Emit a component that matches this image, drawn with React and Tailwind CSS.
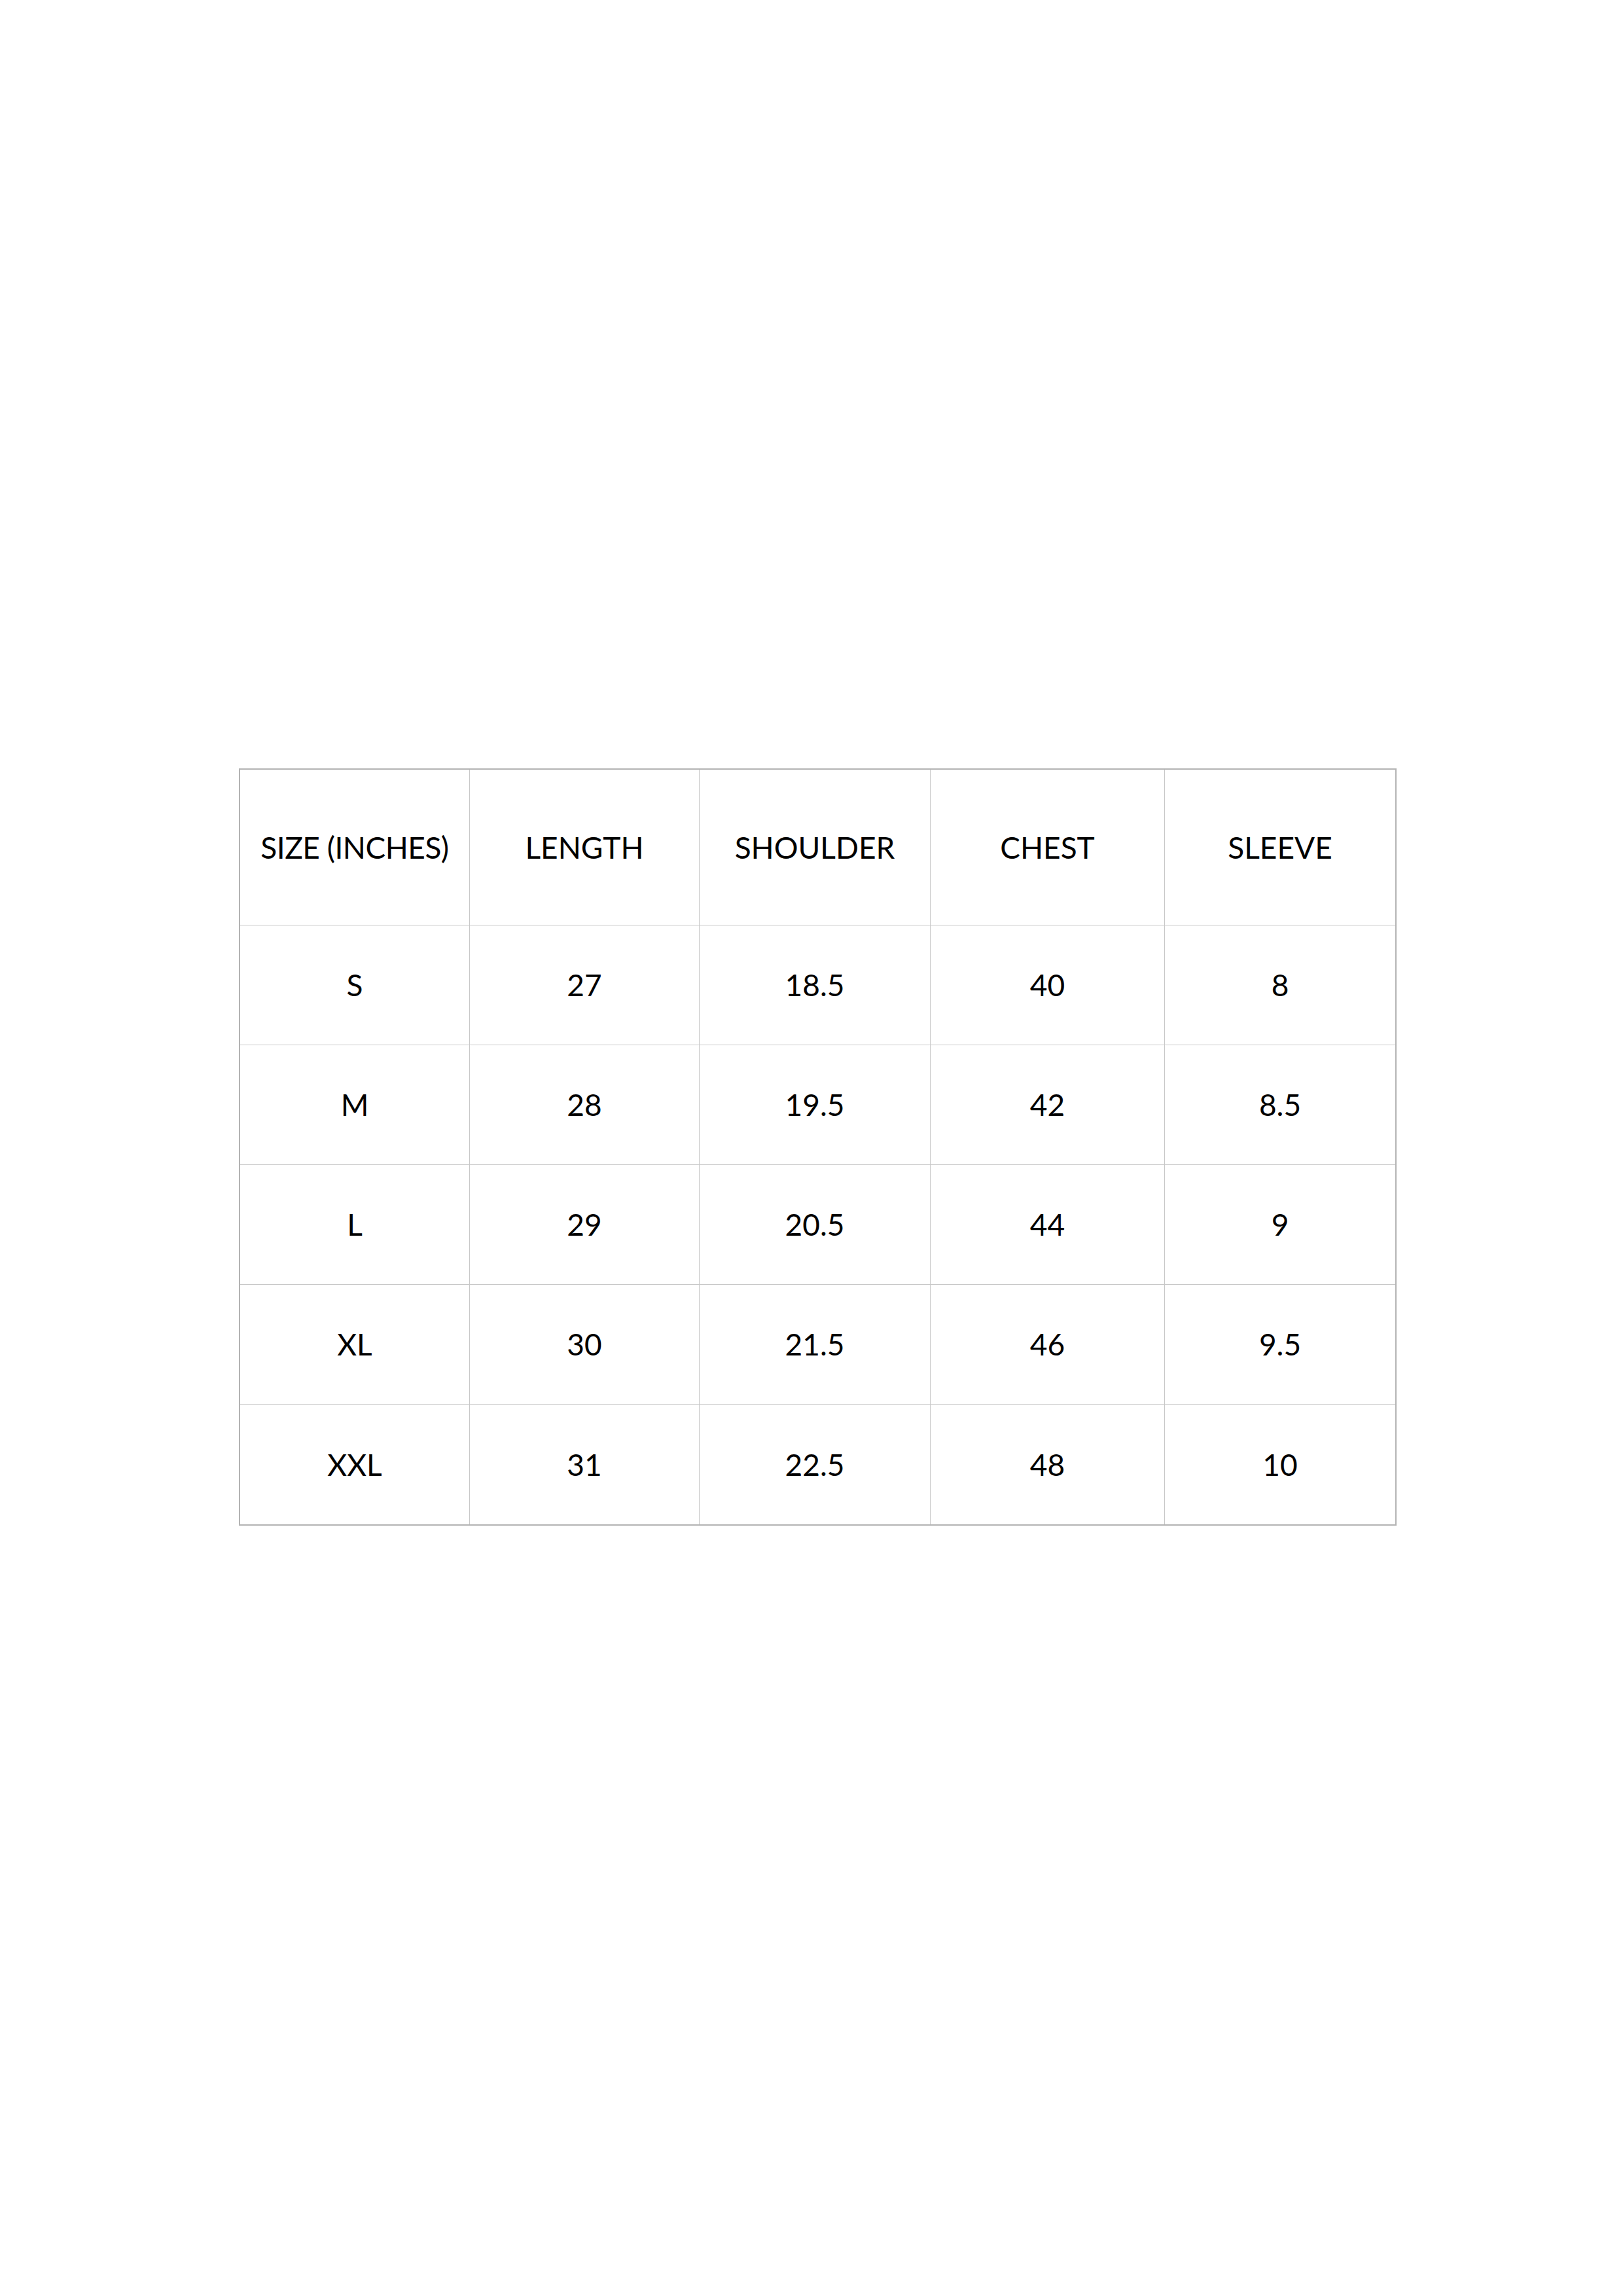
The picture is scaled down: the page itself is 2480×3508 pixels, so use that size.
import React from "react";

const header = ["SIZE (INCHES)", "LENGTH", "SHOULDER", "CHEST", "SLEEVE"];
const rows = [
  ["S", "27", "18.5", "40", "8"],
  ["M", "28", "19.5", "42", "8.5"],
  ["L", "29", "20.5", "44", "9"],
  ["XL", "30", "21.5", "46", "9.5"],
  ["XXL", "31", "22.5", "48", "10"],
];

function Cell({ children, last, bottom, header: isHeader, first }) {
  return (
    <div
      className={
        "flex items-center justify-center border-[#c8c8c8] text-black " +
        (last ? "" : "border-r ") +
        (bottom ? "" : "border-b ") +
        (isHeader ? "h-[238px] text-[46px] " : "h-[183px] text-[46px] ") +
        (isHeader && first ? "tracking-[-0.5px] " : "")
      }
    >
      <span className="leading-none">{children}</span>
    </div>
  );
}

export default function App() {
  return (
    <div className="min-h-[3508px] w-[2480px] bg-white pt-[1174px] pl-[365px] font-['Lato','Liberation_Sans',sans-serif]">
      <div className="w-[1769px] border-2 border-[#b3b3b3]">
        <div className="grid grid-cols-[351px_351px_353px_358px_1fr]">
          {header.map((h, i) => (
            <Cell key={h} header first={i === 0} last={i === 4}>
              {h}
            </Cell>
          ))}
          {rows.map((r, ri) =>
            r.map((v, ci) => (
              <Cell key={ri + "-" + ci} last={ci === 4} bottom={ri === rows.length - 1}>
                {v}
              </Cell>
            ))
          )}
        </div>
      </div>
    </div>
  );
}
